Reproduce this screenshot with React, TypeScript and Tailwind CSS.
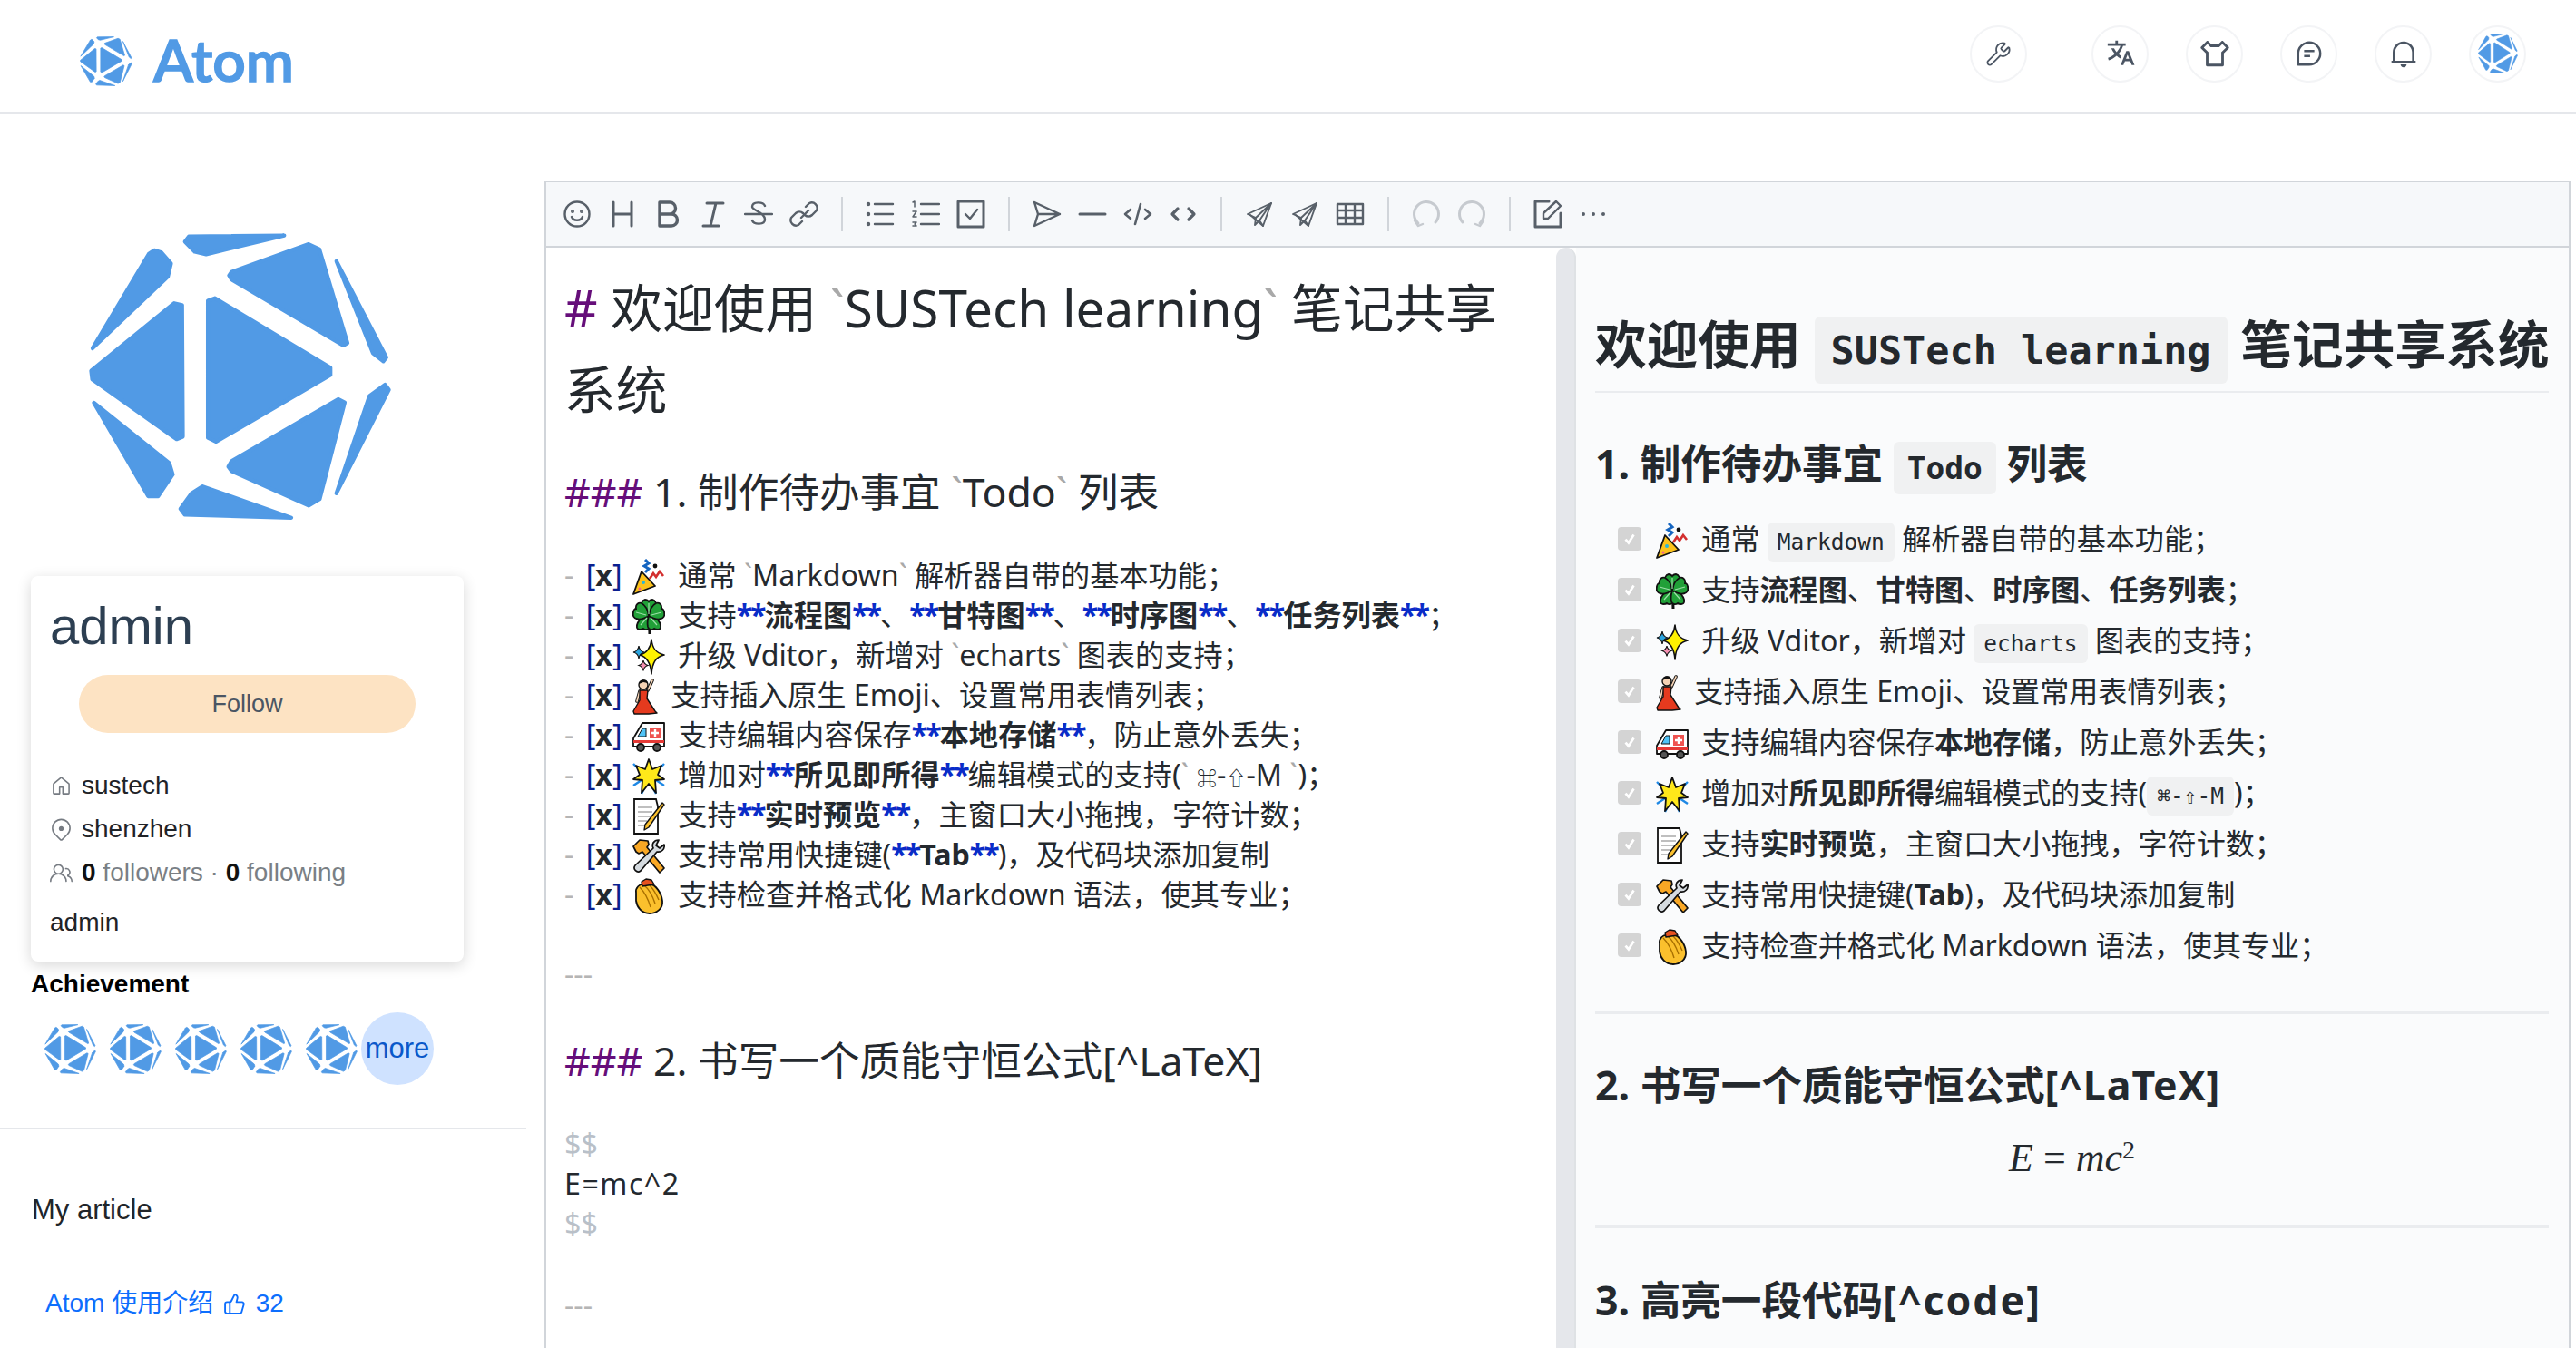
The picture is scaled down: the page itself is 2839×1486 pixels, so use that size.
import React from 'react';
import { GoHome, GoLocation, GoPeople } from 'react-icons/go';
import { RiTranslate2, RiTShirtLine, RiNotification2Line } from 'react-icons/ri';
import { ThumbsUp, Wrench } from 'lucide-react';

// logo shards, traced off the big profile picture
const SHARDS = [
  '545,660 820,657 595,709 562,702 534,674',
  '668,758 890,681 921,695 1002,955 990,962 668,779 661,768',
  '970,728 1114,995 1105,1006 1075,983',
  '430,708 446,698 466,704 494,735 485,771 268,970',
  '503,845 526,850 528,1215 510,1222 267,1056 264,1032',
  '600,838 620,831 953,1024 953,1044 624,1229 600,1218',
  '668,1283 975,1111 994,1120 922,1388 890,1406 668,1310 659,1298',
  '1065,1102 1110,1071 1121,1085 970,1372',
  '272,1121 489,1288 499,1320 457,1380 428,1380',
  '585,1353 840,1440 533,1431 521,1415 553,1372',
];

function Logo({ className }: { className?: string }) {
  return (
    <svg viewBox="255 648 875 800" preserveAspectRatio="none" className={className}>
      {SHARDS.map((p) => (
        <polygon key={p} points={p} fill="#519ae5" stroke="#519ae5" strokeWidth="11" strokeLinejoin="round" />
      ))}
    </svg>
  );
}

function HeadBtn({ children, className = '' }: { children: React.ReactNode; className?: string }) {
  return (
    <div className={`flex h-[63px] w-[63px] items-center justify-center rounded-full border-2 border-[#f3f4f6] text-[#4b5563] ${className}`}>
      {children}
    </div>
  );
}

// ---- toolbar icons
function Tb({ children, dim }: { children: React.ReactNode; dim?: boolean }) {
  return (
    <div className="flex h-[30px] w-[50px] shrink-0 items-center justify-center">
      <svg
        viewBox="0 0 32 32"
        fill="none"
        stroke={dim ? '#c6cacf' : '#586069'}
        strokeWidth="2.4"
        strokeLinecap="round"
        strokeLinejoin="round"
        className="h-[32px] w-[32px]"
      >
        {children}
      </svg>
    </div>
  );
}

function Sep() {
  return <div className="mx-[16px] h-[38px] w-[2px] shrink-0 bg-[#d1d5da]" />;
}

const Plane = () => (
  <g strokeWidth="1.900">
    <path d="M29 4 3 16l9 4-1 8 5-5 4 6Z" />
    <path d="M29 4 12 20M29 4 16 23M6 17l14 12" />
  </g>
);

function Toolbar() {
  return (
    <div className="flex h-[72px] items-center border-b-2 border-[#d1d5da] bg-[#f6f8fa] pl-[9px]">
      <Tb><circle cx="16" cy="16" r="13.5" /><circle cx="11" cy="13" r=".8" /><circle cx="21" cy="13" r=".8" /><path d="M10 19c2 5 10 5 12 0" /></Tb>
      <Tb><path d="M6 3v26M26 3v26M6 16h20" strokeWidth="3" /></Tb>
      <Tb><path d="M7 3h11a6.500 6.500 0 0 1 0 13H7Zm0 13h13a6.500 6.500 0 0 1 0 13H7Z" strokeWidth="3.400" /></Tb>
      <Tb><path d="M9 4h18M5 29h17M19 4l-6 25" strokeWidth="3" /></Tb>
      <Tb><path d="M1 16h30M23 7c-2-5-14-5-14 1 0 4 14 6 14 14 0 6-12 6-14 1" /></Tb>
      <Tb><path d="M13 20l8-8M18 8l4-4a6 6 0 0 1 8 8l-5 5a6 6 0 0 1-8 0M14 24l-4 4a6 6 0 0 1-8-8l5-5a6 6 0 0 1 8 0" /></Tb>
      <Sep />
      <Tb><path d="M10 5h20M10 16h20M10 27h20" /><circle cx="3" cy="5" r="1" /><circle cx="3" cy="16" r="1" /><circle cx="3" cy="27" r="1" /></Tb>
      <Tb><path d="M11 5h20M11 16h20M11 27h20" /><path d="M2 3l2-1v6M2 13h4l-4 6h4M2 25h4l-2 2 2 2H2" strokeWidth="1.500" /></Tb>
      <Tb><path d="M2 2h28v28H2Z" strokeWidth="3" /><path d="M10 16l5 5 8-10" /></Tb>
      <Sep />
      <Tb><path d="M2 3 30 16 2 29l4-13ZM6 16h24" /></Tb>
      <Tb><path d="M2 16h28" strokeWidth="3" /></Tb>
      <Tb><path d="M8 11 2 16l6 5M24 11l6 5-6 5M19 5l-6 22" strokeWidth="2.600" /></Tb>
      <Tb><path d="M10 10 4 16l6 6M22 10l6 6-6 6" strokeWidth="3.200" /></Tb>
      <Sep />
      <Tb><Plane /></Tb>
      <Tb><Plane /></Tb>
      <Tb><path d="M2 5h28v22H2ZM2 12h28M2 20h28M11 5v22M21 5v22" /></Tb>
      <Sep />
      <Tb dim><path d="M7 26a13.500 13.500 0 1 1 19-1" strokeWidth="3" /><path d="M3 23l4 6 5-2" strokeWidth="2.400" /></Tb>
      <Tb dim><path d="M25 26A13.500 13.500 0 1 0 6 25" strokeWidth="3" /><path d="M29 23l-4 6-5-2" strokeWidth="2.400" /></Tb>
      <Sep />
      <Tb><path d="M17 2H2v28h28V15" strokeWidth="3" /><path d="M11 21v-6L25 2l5 5-14 14Z" /></Tb>
      <div className="flex h-[30px] w-[50px] shrink-0 items-center justify-center gap-[7px]">
        <span className="h-[4px] w-[4px] rounded-full bg-[#586069]" />
        <span className="h-[4px] w-[4px] rounded-full bg-[#586069]" />
        <span className="h-[4px] w-[4px] rounded-full bg-[#586069]" />
      </div>
    </div>
  );
}

// ---- emoji, drawn since there is no colour emoji font to rely on
const EMOJI: Record<string, React.ReactNode> = {
  party: (
    <>
      <path d="M1 39 10 14l15 16Z" fill="#fcc21b" stroke="#111" strokeWidth="1.800" strokeLinejoin="round" />
      <circle cx="12" cy="26" r="2" fill="#29b6d8" />
      <circle cx="8" cy="33" r="1.500" fill="#f06292" />
      <path d="M14 1l4 4-5 3 5 3-4 4" fill="none" stroke="#1565c0" strokeWidth="3" />
      <path d="M19 22l4-6 3 4 4-6 4 5" fill="none" stroke="#d32f2f" strokeWidth="2.600" />
      <circle cx="25" cy="8" r="2.400" fill="#111" />
    </>
  ),
  clover: (
    <>
      <path d="M18 20c0 8 1 13 1 19" fill="none" stroke="#111" strokeWidth="3" />
      <g fill="#21a038" stroke="#111" strokeWidth="1.800">
        <path d="M18 19C8 19 7 2 14 1c2 0 3 1 4 2 1-1 2-2 4-2 7 1 6 18-4 18Z" />
        <path d="M18 19C6 19 1 34 8 34c2 0 3 0 4-1 3 2 6 1 7-2 1-4 0-9-1-12Z" />
        <path d="M18 19c12 0 17 15 10 15-2 0-3 0-4-1-3 2-6 1-7-2-1-4 0-9 1-12Z" />
        <path d="M18 19C8 25-1 23 1 15c0-3 2-4 3-4-1-5 3-7 6-6 4 2 7 8 8 14Zm0 0c10 6 19 4 17-4 0-3-2-4-3-4 1-5-3-7-6-6-4 2-7 8-8 14Z" />
      </g>
      <path d="M18 5v12M9 29l7-8M27 29l-7-8M4 15l11 3M32 15l-11 3" stroke="#9ddfa8" strokeWidth="1.200" />
    </>
  ),
  sparkle: (
    <>
      <path d="M21 1c1 10 5 15 14 17-9 2-13 8-14 21-1-13-5-19-13-21 8-2 12-7 13-17Z" fill="#fff200" stroke="#111" strokeWidth="1.600" strokeLinejoin="round" />
      <path d="M7 8c.5 4 2 6 6 7-4 1-5.500 3-6 7-.5-4-2-6-6-7 4-1 5.500-3 6-7Z" fill="#2aa5e0" stroke="#111" strokeWidth="1.200" />
      <path d="M12 24c.5 3 2 4.500 5 5.500-3 1-4.500 2.500-5 6-.5-3.500-2-5-5-6 3-1 4.500-2.500 5-5.500Z" fill="#f48fb1" stroke="#111" strokeWidth="1.200" />
    </>
  ),
  dancer: (
    <>
      <path d="M17 13 22 2" stroke="#111" strokeWidth="3.600" strokeLinecap="round" />
      <path d="M17 13 22 2" stroke="#f5d3b5" strokeWidth="1.800" strokeLinecap="round" />
      <path d="M8 14 5 25" stroke="#111" strokeWidth="3.600" strokeLinecap="round" />
      <path d="M8 14 5 25" stroke="#f5d3b5" strokeWidth="1.800" strokeLinecap="round" />
      <circle cx="12" cy="7" r="5" fill="#f5d3b5" stroke="#111" strokeWidth="1.400" />
      <path d="M7 6c0-5 9-7 10-1l-5-1Z" fill="#111" />
      <path d="M8 13h9l-1 9 9 14 2 2-9 1H2l-1-3 7-12Z" fill="#e53a1e" stroke="#111" strokeWidth="1.400" strokeLinejoin="round" />
    </>
  ),
  ambulance: (
    <>
      <path d="M11 5h24v26H1v-9L11 5Z" fill="#fff" stroke="#111" strokeWidth="1.800" strokeLinejoin="round" />
      <path d="M1 24h34v3H1Z" fill="#e53935" />
      <path d="M6 20l5-9h4v9Z" fill="#4fc3f7" stroke="#111" strokeWidth="1" />
      <path d="M19 10h12v12H19Z" fill="#ef5350" />
      <path d="M25 12v8M21 16h8" stroke="#fff" strokeWidth="2.400" />
      <circle cx="9" cy="32" r="4" fill="#555" stroke="#111" strokeWidth="1.800" />
      <circle cx="27" cy="32" r="4" fill="#555" stroke="#111" strokeWidth="1.800" />
    </>
  ),
  boom: (
    <>
      <path d="M1 6l9 9M35 6l-9 9M1 30l9-6M35 30l-9-6M10 39l4-8M26 39l-4-8" stroke="#1e88e5" strokeWidth="2.400" />
      <path d="M18 1l4 11 10-4-4 10 7 5-10 1 1 14-8-10-8 10 1-14-10-1 7-5-4-10 10 4Z" fill="#ffe81a" stroke="#111" strokeWidth="1.800" strokeLinejoin="round" />
    </>
  ),
  memo: (
    <>
      <path d="M2 1h24l2 8v30H2Z" fill="#fff" stroke="#111" strokeWidth="1.800" />
      <path d="M6 10h16M6 15h16M6 20h14M6 25h10M6 30h8" stroke="#aaa" strokeWidth="1.400" />
      <path d="M33 5l2 2-17 25-5 3 1-6Z" fill="#fbc02d" stroke="#111" strokeWidth="1.400" strokeLinejoin="round" />
    </>
  ),
  tools: (
    <>
      <path d="M1 9l7-7 9 1 1 4-2 3 19 23-5 5-19-23-4 2-3-2Z" fill="#f9a825" stroke="#111" strokeWidth="1.700" strokeLinejoin="round" />
      <path d="M29 2c-6 0-8 5-6 9L3 30c-3 4 2 9 6 6l18-21c5 1 9-3 8-8l-5 4-4-3Z" fill="#d5dbe0" stroke="#111" strokeWidth="1.700" strokeLinejoin="round" />
    </>
  ),
  clap: (
    <>
      <path d="M4 16C3 11 8 6 12 7l8 0c5 0 12 9 13 18 1 9-7 14-14 14-9 0-14-7-15-14Z" fill="#fbc02d" stroke="#111" strokeWidth="1.800" strokeLinejoin="round" />
      <path d="M8 10c5 5 9 12 12 22M13 8c5 4 9 11 12 20M19 8c4 4 7 9 10 16" fill="none" stroke="#a86f00" strokeWidth="1.400" />
      <path d="M10 4l5-3 6 1 3 5-7 1-6 1Z" fill="#e6511e" stroke="#111" strokeWidth="1.400" strokeLinejoin="round" />
    </>
  ),
};

function Emoji({ name, w = 36 }: { name: string; w?: number }) {
  return (
    <svg viewBox={`0 0 ${w} 40`} style={{ width: w }} className="ml-[3px] mr-[6px] inline-block h-[40px] align-[-10px]">
      {EMOJI[name]}
    </svg>
  );
}

// ---- source pane helpers
const Tick = ({ children }: { children: React.ReactNode }) => (
  <>
    <span className="text-[#a9a9a9]">`</span>
    {children}
    <span className="text-[#a9a9a9]">`</span>
  </>
);

const Strong = ({ children }: { children: React.ReactNode }) => (
  <>
    <span className="font-bold tracking-[-2px] text-[#0a2cc8]">**</span>
    <b>{children}</b>
    <span className="font-bold tracking-[-2px] text-[#0a2cc8]">**</span>
  </>
);

function SrcRow({ emoji, w, children }: { emoji: string; w?: number; children: React.ReactNode }) {
  return (
    <div className="h-[44px] whitespace-pre">
      <span className="text-[#b5b5b5]">- </span>
      <span className="ml-[5px] text-[#0a1f8f]">[<b className="text-[#24292e]">x</b>]</span>{' '}
      <Emoji name={emoji} w={w} /> {children}
    </div>
  );
}

function Src3({ children }: { children: React.ReactNode }) {
  return (
    <div className="h-[62px] whitespace-pre text-[44.600px] leading-[62px]">
      <span className="text-[#660e7a]">###</span> {children}
    </div>
  );
}

// ---- preview pane helpers
function Code({ children, className = 'px-[11px] py-[7px] text-[24.500px] font-normal' }: { children: React.ReactNode; className?: string }) {
  return <code className={`rounded-md bg-[#f0f1f2] font-['DejaVu_Sans_Mono',monospace] ${className}`}>{children}</code>;
}

function PreRow({ emoji, w, children }: { emoji: string; w?: number; children: React.ReactNode }) {
  return (
    <div className="flex h-[56px] items-center">
      <span className="ml-[25px] mr-[13px] flex h-[26px] w-[26px] shrink-0 items-center justify-center rounded-[4px] bg-[#d4d4d4]">
        <svg viewBox="0 0 16 16" className="h-[18px] w-[18px]" fill="none" stroke="#fff" strokeWidth="2.400">
          <path d="M4 8.500 7 12l5-8" />
        </svg>
      </span>
      <span className="h-[56px] whitespace-pre leading-[56px]">
        <Emoji name={emoji} w={w} /> {children}
      </span>
    </div>
  );
}

export default function App() {
  return (
    <div className="flex h-screen w-full flex-col overflow-hidden bg-white font-['Liberation_Sans','Noto_Sans_CJK_SC',sans-serif]">
      <header className="flex h-[126px] shrink-0 items-center border-b-2 border-[#e5e7eb] pl-[88px]">
        <Logo className="mt-[11px] h-[55px] w-[58px]" />
        <span className="ml-[23px] mt-[8px] font-['Lato',sans-serif] text-[64px] font-semibold text-[#519ae5] [-webkit-text-stroke:1.500px_#519ae5]">Atom</span>
        <div className="mb-[6px] ml-auto mr-[55px] flex items-center gap-[41px]">
          <HeadBtn className="mr-[30px]"><Wrench size={29} strokeWidth={1.500} /></HeadBtn>
          <HeadBtn><RiTranslate2 size={34} /></HeadBtn>
          <HeadBtn><RiTShirtLine size={34} /></HeadBtn>
          <HeadBtn>
            <svg viewBox="0 0 32 32" fill="none" stroke="currentColor" strokeWidth="2.600" className="h-[30px] w-[30px]">
              <path d="M16 3a13 13 0 1 1 0 26H3V16A13 13 0 0 1 16 3Z" strokeLinejoin="round" />
              <path d="M10 13h12M10 19h7" />
            </svg>
          </HeadBtn>
          <HeadBtn><RiNotification2Line size={32} /></HeadBtn>
          <HeadBtn><Logo className="h-[44px] w-[44px]" /></HeadBtn>
        </div>
      </header>

      <div className="flex min-h-0 flex-1">
        <aside className="w-[600px] shrink-0">
          <div className="w-[580px]">
            <div className="pl-[97px] pt-[130px]">
              <Logo className="h-[318px] w-[335px]" />
            </div>
            <div className="ml-[34px] mt-[61px] h-[425px] w-[477px] rounded-lg bg-white pl-[21px] pt-[16px] shadow-[0_4px_16px_rgba(0,0,0,0.16)]">
              <div className="text-[58px] leading-[78px] text-[#2d3f52]">admin</div>
              <button className="ml-[32px] mt-[15px] flex h-[64px] w-[371px] items-center justify-center rounded-full bg-[#fde3c3] text-[27px] text-[#4b5563]">
                Follow
              </button>
              <div className="mt-[34px] flex h-[48px] items-center text-[28px] text-[#1f2328]">
                <GoHome size={25} className="mr-[10px] w-[25px] text-[#767b82]" />sustech
              </div>
              <div className="flex h-[48px] items-center text-[28px] text-[#1f2328]">
                <GoLocation size={25} className="mr-[10px] w-[25px] text-[#767b82]" />shenzhen
              </div>
              <div className="flex h-[48px] items-center whitespace-pre text-[28px] text-[#7a7f85]">
                <GoPeople size={25} className="mr-[10px] w-[25px] text-[#767b82]" />
                <b className="text-[#111]">0</b> followers · <b className="text-[#111]">0</b> following
              </div>
              <div className="mt-[7px] text-[28px] leading-[48px] text-[#1f2328]">admin</div>
            </div>
            <div className="ml-[34px] mt-[8px] text-[28px] font-bold leading-[34px] text-black">Achievement</div>
            <div className="ml-[49px] mt-[14px] flex items-center">
              {[0, 1, 2, 3, 4].map((i) => (
                <Logo key={i} className="mr-[15px] h-[55px] w-[57px] shrink-0" />
              ))}
              <div className="-ml-[11px] flex h-[80px] w-[80px] shrink-0 items-center justify-center rounded-full bg-[#cfe2ff] text-[31px] text-[#0a58ca]">
                more
              </div>
            </div>
            <div className="mt-[47px] h-[2px] bg-[#e5e7eb]" />
            <div className="ml-[35px] mt-[70px] text-[31px] leading-[38px] text-[#212529]">My article</div>
            <div className="ml-[50px] mt-[64px] flex items-center whitespace-pre text-[28px] leading-[40px] text-[#0d6efd]">
              Atom 使用介绍 <ThumbsUp size={25} strokeWidth={1.800} className="mx-[3px]" /> 32
            </div>
          </div>
        </aside>

        <main className="min-w-0 flex-1 pr-[6px] pt-[73px]">
          <div className="flex h-[1400px] flex-col border-2 border-b-0 border-[#d1d5da]">
            <Toolbar />
            <div className="flex min-h-0 flex-1 font-['Noto_Sans','Noto_Sans_CJK_SC',sans-serif] text-[#24292e]">
              {/* source side */}
              <div className="w-[1113px] shrink-0 pl-[20px] pr-[20px] pt-[21px] text-[32.200px] leading-[44px]">
                <div className="text-[56.700px] leading-[90px]">
                  <span className="text-[#660e7a]">#</span> 欢迎使用 <Tick>SUSTech learning</Tick> 笔记共享系统
                </div>
                <div className="mt-[37px]">
                  <Src3>1. 制作待办事宜 <Tick>Todo</Tick> 列表</Src3>
                </div>
                <div className="mt-[39px]">
                  <SrcRow emoji="party">通常 <Tick>Markdown</Tick> 解析器自带的基本功能；</SrcRow>
                  <SrcRow emoji="clover">支持<Strong>流程图</Strong>、<Strong>甘特图</Strong>、<Strong>时序图</Strong>、<Strong>任务列表</Strong>；</SrcRow>
                  <SrcRow emoji="sparkle">升级 Vditor，新增对 <Tick>echarts</Tick> 图表的支持；</SrcRow>
                  <SrcRow emoji="dancer" w={28}>支持插入原生 Emoji、设置常用表情列表；</SrcRow>
                  <SrcRow emoji="ambulance">支持编辑内容保存<Strong>本地存储</Strong>，防止意外丢失；</SrcRow>
                  <SrcRow emoji="boom">增加对<Strong>所见即所得</Strong>编辑模式的支持(<Tick> <span className="text-[22px]">⌘</span>-<span className="text-[22px]">⇧</span>-M </Tick>)；</SrcRow>
                  <SrcRow emoji="memo">支持<Strong>实时预览</Strong>，主窗口大小拖拽，字符计数；</SrcRow>
                  <SrcRow emoji="tools">支持常用快捷键(<Strong>Tab</Strong>)，及代码块添加复制</SrcRow>
                  <SrcRow emoji="clap">支持检查并格式化 Markdown 语法，使其专业；</SrcRow>
                </div>
                <div className="mt-[44px] h-[44px] text-[#b5b5b5]">---</div>
                <div className="mt-[42px]">
                  <Src3>2. 书写一个质能守恒公式[^LaTeX]</Src3>
                </div>
                <div className="mt-[39px]">
                  <div className="h-[44px] text-[#b9c0c8]">$$</div>
                  <div className="h-[44px] tracking-[1.500px]">E=mc^2</div>
                  <div className="h-[44px] text-[#b9c0c8]">$$</div>
                </div>
                <div className="mt-[46px] h-[44px] text-[#b5b5b5]">---</div>
              </div>

              {/* drag bar */}
              <div className="w-[22px] shrink-0 rounded-t-full border-r-2 border-r-[#dfe2e5] bg-[#e5e7eb]" />

              {/* rendered side */}
              <div className="min-w-0 flex-1 bg-[#fafbfc] pl-[21px] pr-[22px] pt-[71px] text-[32.100px]">
                <div className="h-[89px] border-b-2 border-[#eaecef] text-[56.700px] font-bold leading-[70px]">
                  <span className="whitespace-pre">欢迎使用 <Code className="px-[18px] py-[12px] text-[43.500px] font-bold">SUSTech learning</Code> 笔记共享系统</span>
                </div>
                <div className="mt-[50px] h-[56px] whitespace-pre text-[44.600px] font-bold leading-[56px]">
                  1. 制作待办事宜 <Code className="px-[15px] py-[9px] text-[34.500px] font-bold">Todo</Code> 列表
                </div>
                <div className="mt-[27px]">
                  <PreRow emoji="party">通常 <Code>Markdown</Code> 解析器自带的基本功能；</PreRow>
                  <PreRow emoji="clover">支持<b>流程图</b>、<b>甘特图</b>、<b>时序图</b>、<b>任务列表</b>；</PreRow>
                  <PreRow emoji="sparkle">升级 Vditor，新增对 <Code>echarts</Code> 图表的支持；</PreRow>
                  <PreRow emoji="dancer" w={28}>支持插入原生 Emoji、设置常用表情列表；</PreRow>
                  <PreRow emoji="ambulance">支持编辑内容保存<b>本地存储</b>，防止意外丢失；</PreRow>
                  <PreRow emoji="boom">增加对<b>所见即所得</b>编辑模式的支持(<Code>⌘-⇧-M</Code>)；</PreRow>
                  <PreRow emoji="memo">支持<b>实时预览</b>，主窗口大小拖拽，字符计数；</PreRow>
                  <PreRow emoji="tools">支持常用快捷键(<b>Tab</b>)，及代码块添加复制</PreRow>
                  <PreRow emoji="clap">支持检查并格式化 Markdown 语法，使其专业；</PreRow>
                </div>
                <div className="mt-[44px] h-[4px] bg-[#eaecef]" />
                <div className="mt-[50px] h-[56px] text-[44.600px] font-bold leading-[56px]">2. 书写一个质能守恒公式<span className="tracking-[1px]">[^LaTeX]</span></div>
                <div className="mt-[25px] h-[56px] whitespace-pre text-center font-['Liberation_Serif',serif] text-[44px] leading-[56px]">
                  <i>E</i> = <i>mc</i><span className="relative -top-[14px] text-[28px]">2</span>
                </div>
                <div className="mt-[45px] h-[4px] bg-[#eaecef]" />
                <div className="mt-[51px] h-[56px] text-[44.600px] font-bold leading-[56px]">3. 高亮一段代码<span className="tracking-[2px]">[^code]</span></div>
              </div>
            </div>
          </div>
        </main>
      </div>
    </div>
  );
}
